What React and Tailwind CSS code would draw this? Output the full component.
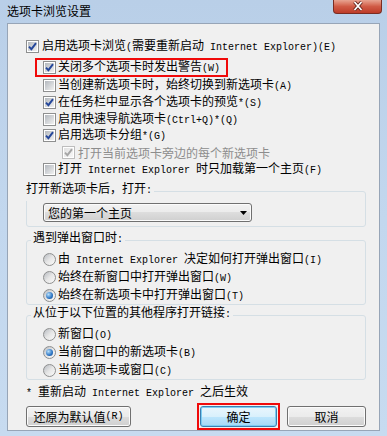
import React from "react";

// ascii runs get the narrow mono face, like SimSun's half-width glyphs
function T({ s }) {
  const parts = s.match(/[\x20-\x7e]+|[^\x20-\x7e]+/g) || [];
  return parts.map((p, i) =>
    /^[\x20-\x7e]+$/.test(p) ? (
      <span key={i} className="whitespace-pre font-['Liberation_Mono',monospace] text-[10px]">
        {p}
      </span>
    ) : (
      <span key={i}>{p}</span>
    )
  );
}

function Check({ checked, disabled }) {
  return (
    <span
      className={`flex h-[13px] w-[13px] shrink-0 border bg-white p-[1px] ${
        disabled ? "border-[#bdbdbd]" : "border-[#8e8f8f]"
      }`}
    >
      <span
        className={`flex flex-1 items-center justify-center bg-gradient-to-br ${
          disabled ? "from-[#e2e2e2] to-[#f7f7f7]" : "from-[#b3b8be] to-[#f1f1f1]"
        }`}
      >
        {checked && (
          <svg width="9" height="9" viewBox="0 0 9 9">
            <path
              d="M1 4.6 L3.4 7.2 L8 1.2"
              fill="none"
              stroke={disabled ? "#a6a6a6" : "#24469a"}
              strokeWidth="1.9"
            />
          </svg>
        )}
      </span>
    </span>
  );
}

function Radio({ on }) {
  return (
    <span className="flex h-[13px] w-[13px] shrink-0 items-center justify-center rounded-full border border-[#8e8f8f] bg-gradient-to-br from-[#b7bbc1] via-[#e6e6e6] to-[#fafafa]">
      {on && (
        <span className="h-[7px] w-[7px] rounded-full bg-[radial-gradient(circle_at_35%_35%,#b8e0fa,#2b74c4_60%,#164784)]" />
      )}
    </span>
  );
}

function CheckRow({ label, checked, disabled, className = "" }) {
  return (
    <div className={`flex h-[18px] items-center gap-[2px] ${className}`}>
      <Check checked={checked} disabled={disabled} />
      <span className={disabled ? "text-[#8d8d8d]" : ""}>
        <T s={label} />
      </span>
    </div>
  );
}

function RadioRow({ label, on }) {
  return (
    <div className="ml-[16px] flex h-[18px] items-center gap-[2px]">
      <Radio on={on} />
      <span>
        <T s={label} />
      </span>
    </div>
  );
}

const btn =
  "flex h-[21px] items-center justify-center rounded-[3px] border border-[#707070] bg-[linear-gradient(#f2f2f2_0%,#ebebeb_50%,#dddddd_50%,#cfcfcf_100%)] shadow-[inset_0_0_0_1px_#fbfbfb]";

export default function App() {
  return (
    <div className="flex h-[436px] w-[387px] flex-col bg-gradient-to-b from-[#b9cfe8] via-[#c2d7ee] to-[#c7dbf0] font-['Noto_Sans_CJK_SC',sans-serif] text-[12px] leading-[12px] text-black">
      {/* title bar */}
      <div className="flex h-[23px] shrink-0 items-start justify-between">
        <span className="pl-[7px] pt-[5px]">选项卡浏览设置</span>
        <div className="mr-[5px] flex h-[14px] w-[49px] items-start justify-center rounded-b-[4px] border border-t-0 border-[#7a2c22] bg-gradient-to-b from-[#e7a391] via-[#d05a45] to-[#bd3b28] pt-[1px]">
          <svg width="12" height="10" viewBox="0 0 12 10">
            <path d="M2.5 1 L9.5 9 M9.5 1 L2.5 9" stroke="#5a1e16" strokeWidth="3.4" />
            <path d="M2.5 1 L9.5 9 M9.5 1 L2.5 9" stroke="#ffffff" strokeWidth="1.8" />
          </svg>
        </div>
      </div>

      {/* dialog body */}
      <div className="mx-[7px] flex h-[408px] flex-col border border-[#97a5b7] bg-[#f0f0f0] pl-[18px] pr-[13px] pt-[14px]">
        <CheckRow label="启用选项卡浏览(需要重新启动 Internet Explorer)(E)" checked className="gap-[3px]" />

        <div className="ml-[9px] mt-[3px] flex h-[19px] w-[193px] items-center gap-[2px] border-2 border-[#f00a0a] pl-[6px]">
          <Check checked />
          <span>
            <T s="关闭多个选项卡时发出警告(W)" />
          </span>
        </div>

        <CheckRow label="当创建新选项卡时，始终切换到新选项卡(A)" className="ml-[17px]" />
        <CheckRow label="在任务栏中显示各个选项卡的预览*(S)" checked className="ml-[17px]" />
        <CheckRow label="启用快速导航选项卡(Ctrl+Q)*(Q)" className="ml-[17px]" />
        <CheckRow label="启用选项卡分组*(G)" checked className="ml-[17px]" />
        <CheckRow label="打开当前选项卡旁边的每个新选项卡" checked disabled className="ml-[36px] gap-[3px]" />
        <CheckRow label="打开 Internet Explorer 时只加载第一个主页(F)" className="ml-[17px]" />

        {/* open new tab with */}
        <fieldset className="mt-[4px] min-w-0 rounded-[3px] border border-[#d5dfe5] pb-[4px] pt-[2px]">
          <legend className="ml-[-1px] pb-[4px] pr-[2px] leading-[12px]">
            <T s="打开新选项卡后，打开:" />
          </legend>
          <div className="ml-[16px] flex h-[19px] w-[209px] items-center justify-between rounded-[3px] border border-[#707070] bg-[linear-gradient(#f2f2f2_0%,#ebebeb_50%,#dddddd_50%,#cfcfcf_100%)] pl-[4px] pr-[4px] shadow-[inset_0_0_0_1px_#fbfbfb]">
            <span>您的第一个主页</span>
            <svg width="7" height="4" viewBox="0 0 7 4">
              <polygon points="0,0 7,0 3.5,4" fill="#000" />
            </svg>
          </div>
        </fieldset>

        {/* popups */}
        <fieldset className="mt-[4px] min-w-0 rounded-[3px] border border-[#d5dfe5]">
          <legend className="ml-[4px] px-[2px] pb-[4px] leading-[12px]">
            <T s="遇到弹出窗口时:" />
          </legend>
          <RadioRow label="由 Internet Explorer 决定如何打开弹出窗口(I)" />
          <RadioRow label="始终在新窗口中打开弹出窗口(W)" />
          <RadioRow label="始终在新选项卡中打开弹出窗口(T)" on />
        </fieldset>

        {/* links from other programs */}
        <fieldset className="mt-[1px] min-w-0 rounded-[3px] border border-[#d5dfe5]">
          <legend className="ml-[4px] px-[2px] pb-[4px] leading-[12px]">
            <T s="从位于以下位置的其他程序打开链接:" />
          </legend>
          <RadioRow label="新窗口(O)" />
          <RadioRow label="当前窗口中的新选项卡(B)" on />
          <RadioRow label="当前选项卡或窗口(C)" />
        </fieldset>

        <div className="mt-[5px] h-[12px]">
          <T s="* 重新启动 Internet Explorer 之后生效" />
        </div>

        {/* buttons */}
        <div className="mt-[6px] flex items-center">
          <div className={`${btn} w-[105px]`}>
            <T s="还原为默认值(R)" />
          </div>
          <div className="ml-auto border-2 border-[#f00a0a] p-[1px]">
            <div className="flex h-[21px] w-[77px] items-center justify-center rounded-[3px] border border-[#3c7fb1] bg-[linear-gradient(#eaf6fd_0%,#d9f0fc_50%,#bee6fd_50%,#a7d9f5_100%)] shadow-[inset_0_0_0_1px_#7ccdf2]">
              确定
            </div>
          </div>
          <div className={`${btn} ml-[7px] w-[79px]`}>取消</div>
        </div>
      </div>
    </div>
  );
}
